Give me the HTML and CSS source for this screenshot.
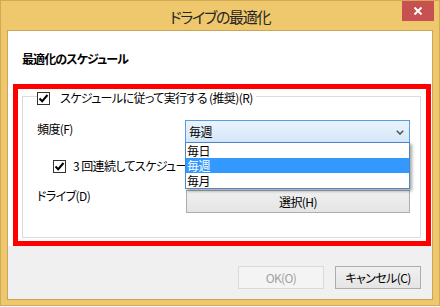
FILE: index.html
```html
<!DOCTYPE html>
<html lang="ja">
<head>
<meta charset="utf-8">
<title>ドライブの最適化</title>
<link rel="stylesheet" href="styles.css">
</head>
<body>
<div class="window">
  <div class="titlebar">
    <div class="title">ドライブの最適化</div>
    <div class="close">
      <svg width="8" height="8" viewBox="0 0 8 8"><path d="M0.5 0.5 L7.5 7.5 M7.5 0.5 L0.5 7.5" stroke="#fff" stroke-width="2" fill="none"/></svg>
    </div>
  </div>
  <div class="client">
    <div class="panel">
      <div class="heading">最適化のスケジュール</div>
      <div class="group">
        <div class="legend">
          <span class="check"><svg width="11" height="11" viewBox="0 0 11 11"><path d="M1.5 5.5 L4.2 8.2 L9.5 2" stroke="#000" stroke-width="2" fill="none"/></svg></span>
          <span>スケジュールに従って実行する (推奨)(R)</span>
        </div>
        <div class="row row-freq">
          <span class="label">頻度(F)</span>
          <div class="combo">
            <span class="combo-value">毎週</span>
            <svg class="chevron" width="8" height="5" viewBox="0 0 8 5"><path d="M0.8 0.8 L4 4 L7.2 0.8" stroke="#555" stroke-width="1.6" fill="none"/></svg>
            <ul class="droplist">
              <li>毎日</li>
              <li class="selected">毎週</li>
              <li>毎月</li>
            </ul>
          </div>
        </div>
        <div class="row row-check">
          <span class="check"><svg width="11" height="11" viewBox="0 0 11 11"><path d="M1.5 5.5 L4.2 8.2 L9.5 2" stroke="#000" stroke-width="2" fill="none"/></svg></span>
          <span class="check-text">3 回連続してスケジュールされた実行が行われなかった場合に優先度を上げる(I)</span>
        </div>
        <div class="row row-drive">
          <span class="label label-drive">ドライブ(D)</span>
          <div class="btn btn-select">選択(H)</div>
        </div>
      </div>
    </div>
    <div class="footer">
      <div class="btn btn-disabled">OK(O)</div>
      <div class="btn">キャンセル(C)</div>
    </div>
  </div>
</div>
<div class="mark-box"></div>
</body>
</html>
```
FILE: styles.css
```css
html, body {
  margin: 0;
  padding: 0;
  background: #ffffff;
}

body {
  font-family: "Noto Sans CJK JP", "Noto Sans", sans-serif;
  font-size: 12px;
  font-feature-settings: "palt" 1;
  letter-spacing: -0.6px;
  color: #000;
  -webkit-font-smoothing: antialiased;
}

.window {
  width: 440px;
  height: 306px;
  box-sizing: border-box;
  border: 1px solid #d1aa55;
  background: #efc76c;
  display: flex;
  flex-direction: column;
}

.titlebar {
  height: 29px;
  flex: none;
  position: relative;
  display: flex;
  align-items: center;
  justify-content: center;
  padding-top: 2px;
  box-sizing: border-box;
}

.title {
  font-size: 15px;
  line-height: 18px;
  letter-spacing: -1.3px;
  color: #262626;
}

.close {
  position: absolute;
  top: 0;
  right: 5px;
  width: 32px;
  height: 20px;
  background: #c75050;
  display: flex;
  align-items: center;
  justify-content: center;
}

.client {
  margin: 0 6px;
  height: 270px;
  box-sizing: border-box;
  border: 1px solid #c9a55c;
  background: #f0f0f0;
  display: flex;
  flex-direction: column;
}

.panel {
  height: 215px;
  flex: none;
  box-sizing: border-box;
  background: #fff;
  padding: 20px 11px 0 14px;
}

.heading {
  font-weight: bold;
  line-height: 16px;
  height: 16px;
  letter-spacing: -0.9px;
}

.group {
  margin-top: 29px;
  height: 142px;
  box-sizing: border-box;
  border: 1px solid #dcdcdc;
  padding: 0 10px 0 14px;
}

.legend {
  margin-top: -7px;
  width: fit-content;
  height: 16px;
  display: flex;
  align-items: center;
  gap: 10px;
  background: #fff;
  padding-right: 3px;
  line-height: 16px;
}

.check {
  width: 13px;
  height: 13px;
  box-sizing: border-box;
  border: 1px solid #333;
  background: #fff;
  display: flex;
  align-items: center;
  justify-content: center;
  flex: none;
}

.row {
  display: flex;
}

.row-freq {
  margin-top: 14px;
  height: 23px;
}

.label {
  width: 148px;
  flex: none;
  line-height: 16px;
  padding-top: 1px;
}

.label-drive {
  padding-top: 0;
  margin-top: -2px;
}

.combo {
  flex: 1;
  position: relative;
  height: 23px;
  box-sizing: border-box;
  border: 1px solid #569de5;
  background: linear-gradient(#eaf3fc, #d4e7f9);
  display: flex;
  align-items: center;
  padding: 0 5px 0 3px;
}

.combo-value {
  flex: 1;
  line-height: 16px;
}

.chevron {
  display: block;
  margin-top: 1px;
}

.droplist {
  list-style: none;
  margin: 0;
  padding: 0;
  position: absolute;
  z-index: 2;
  top: 21px;
  left: -1px;
  right: -1px;
  border: 1px solid #4a86c8;
  background: #fff;
  box-shadow: 2px 2px 3px rgba(0, 0, 0, 0.35);
}

.droplist li {
  height: 15px;
  line-height: 15px;
  padding-left: 1px;
}

.droplist .selected {
  background: #3399ff;
  color: #fff;
}

.row-check {
  margin-top: 15px;
  height: 16px;
  align-items: center;
  padding-left: 16px;
  gap: 7px;
}

.check-text {
  width: 339px;
  overflow: hidden;
  white-space: nowrap;
  line-height: 16px;
}

.row-drive {
  margin-top: 16px;
  height: 23px;
}

.btn {
  width: 86px;
  height: 23px;
  box-sizing: border-box;
  border: 1px solid #adadad;
  background: linear-gradient(#f0f0f0, #e5e5e5);
  display: flex;
  align-items: center;
  justify-content: center;
  line-height: 16px;
}

.btn-select {
  flex: 1;
  margin-left: 1px;
}

.footer {
  flex: 1;
  display: flex;
  justify-content: flex-end;
  align-items: flex-start;
  gap: 11px;
  padding: 20px 11px 0 0;
}

.btn-disabled {
  border-color: #d9d9d9;
  background: #f4f4f4;
  color: #a0a0a0;
}

.mark-box {
  position: absolute;
  left: 13px;
  top: 84px;
  width: 418px;
  height: 162px;
  box-sizing: border-box;
  border: 5px solid #ff0000;
  pointer-events: none;
}
```
